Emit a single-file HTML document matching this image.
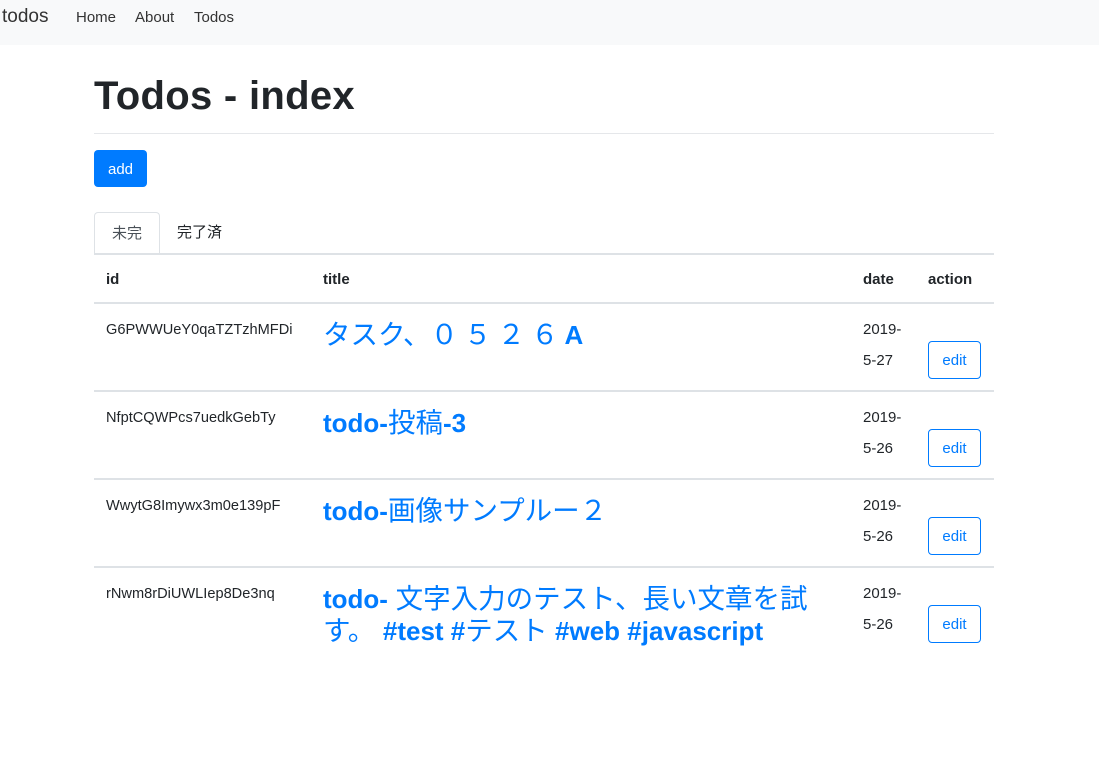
<!DOCTYPE html>
<html><head><meta charset="utf-8"><style>
*{box-sizing:border-box;margin:0;padding:0}
body{width:1099px;height:765px;background:#fff;font-family:"Liberation Sans","Noto Sans CJK JP",sans-serif;color:#212529;position:relative;overflow:hidden}
.a{position:absolute;white-space:nowrap}
.nav{position:absolute;left:0;top:0;width:1099px;height:45px;background:#f8f9fa}
.btn-e{position:absolute;left:928px;width:53px;height:38px;border:1px solid #007bff;border-radius:4px;color:#007bff;font-size:15px;text-align:center;line-height:38px}
.line{position:absolute;left:94px;width:900px;height:2px;background:#dee2e6}
.t{position:absolute;left:323px;font-size:26px;color:#007bff;font-weight:bold;line-height:32px}
.t span{font-weight:normal;font-size:27.5px}
.id{position:absolute;left:106px;font-size:14.6px;line-height:24px}
.d{position:absolute;left:863px;font-size:15px;line-height:31px}
</style></head><body>
<div class="nav"></div>
<div class="a" style="left:2px;top:6px;font-size:19px;color:#333">todos</div>
<div class="a" style="left:76px;top:9px;font-size:15px;color:#333">Home</div>
<div class="a" style="left:135px;top:9px;font-size:15px;color:#333">About</div>
<div class="a" style="left:194px;top:9px;font-size:15px;color:#333">Todos</div>
<div class="a" style="left:94px;top:72px;font-size:40px;font-weight:bold;line-height:48px;letter-spacing:0.3px">Todos - index</div>
<div class="a" style="left:94px;top:133px;width:900px;height:1px;background:#e5e7ea"></div>
<div class="a" style="left:94px;top:150px;width:53px;height:37px;background:#007bff;border-radius:4px;color:#fff;font-size:15px;text-align:center;line-height:39px">add</div>
<div class="a" style="left:94px;top:212px;width:66px;height:43px;border:1px solid #dee2e6;border-bottom:none;border-radius:4px 4px 0 0;background:#fff;font-size:15px;text-align:center;line-height:42px;color:#495057">未完</div>
<div class="a" style="left:177px;top:212px;font-size:15px;line-height:42px">完了済</div>
<div class="line" style="top:253px"></div>
<div class="a" style="left:106px;top:270px;font-size:15px;font-weight:bold;line-height:20px">id</div>
<div class="a" style="left:323px;top:270px;font-size:15px;font-weight:bold;line-height:20px">title</div>
<div class="a" style="left:863px;top:270px;font-size:15px;font-weight:bold;line-height:20px">date</div>
<div class="a" style="left:928px;top:270px;font-size:15px;font-weight:bold;line-height:20px">action</div>
<div class="line" style="top:302px"></div>

<div class="id" style="top:318px">G6PWWUeY0qaTZTzhMFDi</div>
<div class="t a" style="top:319px"><span>タスク、</span><span style="letter-spacing:6px">０５２６</span>A</div>
<div class="d" style="top:314px">2019-<br>5-27</div>
<div class="btn-e" style="top:341px">edit</div>
<div class="line" style="top:390px"></div>

<div class="id" style="top:406px">NfptCQWPcs7uedkGebTy</div>
<div class="t a" style="top:407px">todo-<span>投稿</span>-3</div>
<div class="d" style="top:402px">2019-<br>5-26</div>
<div class="btn-e" style="top:429px">edit</div>
<div class="line" style="top:478px"></div>

<div class="id" style="top:494px">WwytG8Imywx3m0e139pF</div>
<div class="t a" style="top:495px">todo-<span>画像サンプルー２</span></div>
<div class="d" style="top:490px">2019-<br>5-26</div>
<div class="btn-e" style="top:517px">edit</div>
<div class="line" style="top:566px"></div>

<div class="id" style="top:582px">rNwm8rDiUWLIep8De3nq</div>
<div class="t a" style="top:583px">todo-<span> 文字入力のテスト、長い文章を試</span><br><span>す。 </span>#test #<span>テスト</span> #web #javascript</div>
<div class="d" style="top:578px">2019-<br>5-26</div>
<div class="btn-e" style="top:605px">edit</div>
</body></html>
